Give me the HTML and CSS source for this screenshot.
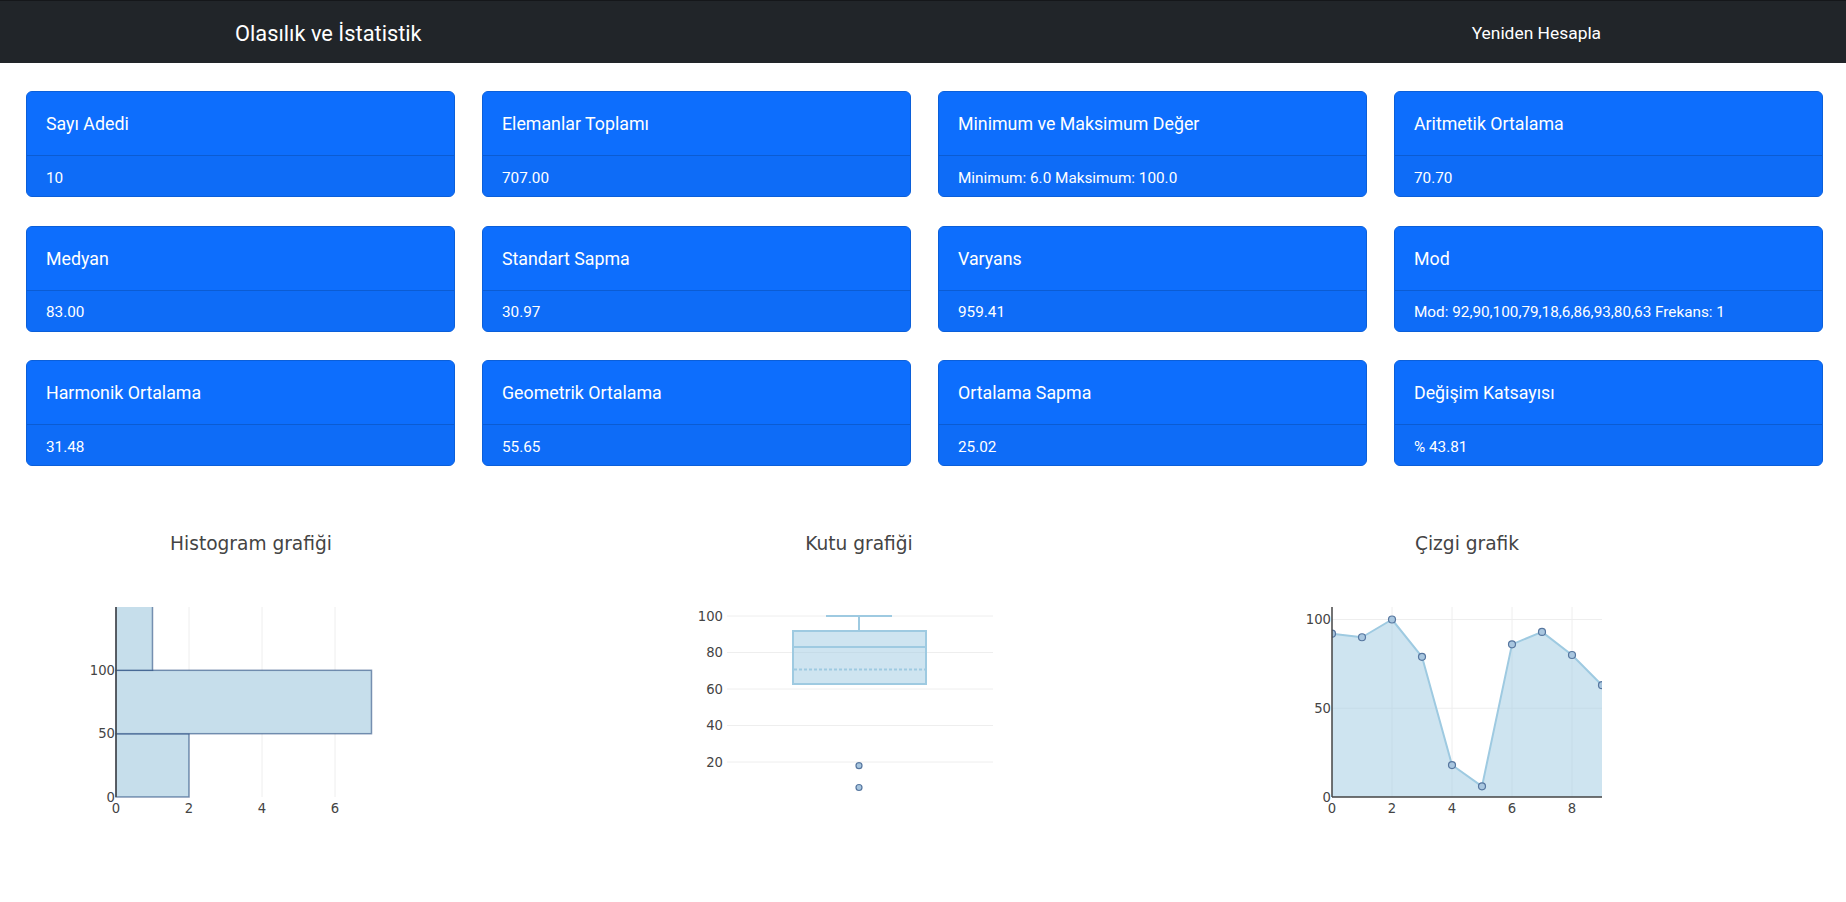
FILE: index.html
```html
<!DOCTYPE html>
<html lang="tr">
<head>
<meta charset="utf-8">
<title>Olasılık ve İstatistik</title>
<link rel="stylesheet" href="styles.css">
</head>
<body>
<nav class="navbar">
  <span class="brand">Olasılık ve İstatistik</span>
  <a class="nav-link" href="#">Yeniden Hesapla</a>
</nav>
<main class="main">
  <section class="cards">
    <div class="card"><div class="card-header">Sayı Adedi</div><div class="card-body">10</div></div>
    <div class="card"><div class="card-header">Elemanlar Toplamı</div><div class="card-body">707.00</div></div>
    <div class="card"><div class="card-header">Minimum ve Maksimum Değer</div><div class="card-body">Minimum: 6.0 Maksimum: 100.0</div></div>
    <div class="card"><div class="card-header">Aritmetik Ortalama</div><div class="card-body">70.70</div></div>
    <div class="card"><div class="card-header">Medyan</div><div class="card-body">83.00</div></div>
    <div class="card"><div class="card-header">Standart Sapma</div><div class="card-body">30.97</div></div>
    <div class="card"><div class="card-header">Varyans</div><div class="card-body">959.41</div></div>
    <div class="card"><div class="card-header">Mod</div><div class="card-body">Mod: 92,90,100,79,18,6,86,93,80,63 Frekans: 1</div></div>
    <div class="card"><div class="card-header">Harmonik Ortalama</div><div class="card-body">31.48</div></div>
    <div class="card"><div class="card-header">Geometrik Ortalama</div><div class="card-body">55.65</div></div>
    <div class="card"><div class="card-header">Ortalama Sapma</div><div class="card-body">25.02</div></div>
    <div class="card"><div class="card-header">Değişim Katsayısı</div><div class="card-body">% 43.81</div></div>
  </section>

  <section class="charts">
    <!-- Histogram -->
    <div class="chart">
      <svg width="450" height="350" viewBox="0 0 450 350" class="plot">
        <defs><clipPath id="c1"><rect x="89" y="107" width="272" height="192"/></clipPath></defs>
        <text x="225" y="50" class="ctitle">Histogram grafiği</text>
        <g class="grid">
          <line x1="163" y1="107" x2="163" y2="297"/>
          <line x1="236" y1="107" x2="236" y2="297"/>
          <line x1="309" y1="107" x2="309" y2="297"/>
        </g>
        <g clip-path="url(#c1)" class="hbar">
          <rect x="90" y="233.7" width="73" height="63.3"/>
          <rect x="90" y="170.3" width="255.5" height="63.4"/>
          <rect x="90" y="100" width="36.5" height="70.3"/>
        </g>
        <line x1="90" y1="107" x2="90" y2="297" class="axis"/>
        <g class="ytick">
          <text x="89" y="301.5">0</text>
          <text x="89" y="238">50</text>
          <text x="89" y="174.6">100</text>
        </g>
        <g class="xtick">
          <text x="90" y="313">0</text>
          <text x="163" y="313">2</text>
          <text x="236" y="313">4</text>
          <text x="309" y="313">6</text>
        </g>
      </svg>
    </div>

    <!-- Box -->
    <div class="chart">
      <svg width="450" height="350" viewBox="0 0 450 350" class="plot">
        <text x="225" y="50" class="ctitle">Kutu grafiği</text>
        <g class="grid">
          <line x1="93" y1="262" x2="359" y2="262"/>
          <line x1="93" y1="225.5" x2="359" y2="225.5"/>
          <line x1="93" y1="189" x2="359" y2="189"/>
          <line x1="93" y1="152.5" x2="359" y2="152.5"/>
          <line x1="93" y1="116" x2="359" y2="116"/>
        </g>
        <g class="box">
          <line x1="225" y1="116" x2="225" y2="131"/>
          <line x1="192" y1="116" x2="258" y2="116"/>
          <rect x="159" y="131" width="133" height="53" class="boxrect"/>
          <line x1="159" y1="147" x2="292" y2="147"/>
          <line x1="160" y1="169.5" x2="291" y2="169.5" class="mean"/>
        </g>
        <g class="marker">
          <circle cx="225" cy="265.7" r="3"/>
          <circle cx="225" cy="287.5" r="3"/>
        </g>
        <g class="ytick">
          <text x="89" y="266.5">20</text>
          <text x="89" y="230">40</text>
          <text x="89" y="193.5">60</text>
          <text x="89" y="157">80</text>
          <text x="89" y="120.5">100</text>
        </g>
      </svg>
    </div>

    <!-- Line -->
    <div class="chart">
      <svg width="450" height="350" viewBox="0 0 450 350" class="plot">
        <defs><clipPath id="c3"><rect x="90" y="107" width="270" height="190"/></clipPath></defs>
        <text x="225" y="50" class="ctitle">Çizgi grafik</text>
        <g class="grid">
          <line x1="150" y1="107" x2="150" y2="297"/>
          <line x1="210" y1="107" x2="210" y2="297"/>
          <line x1="270" y1="107" x2="270" y2="297"/>
          <line x1="330" y1="107" x2="330" y2="297"/>
          <line x1="90" y1="208.25" x2="360" y2="208.25"/>
          <line x1="90" y1="119.5" x2="360" y2="119.5"/>
        </g>
        <g clip-path="url(#c3)">
          <polygon class="area" points="90,297 90,133.7 120,137.25 150,119.5 180,156.8 210,265.05 240,286.35 270,144.35 300,131.9 330,155 360,185.2 360,297"/>
          <polyline class="trace" points="90,133.7 120,137.25 150,119.5 180,156.8 210,265.05 240,286.35 270,144.35 300,131.9 330,155 360,185.2"/>
          <g class="marker">
            <circle cx="90" cy="133.7" r="3.5"/>
            <circle cx="120" cy="137.25" r="3.5"/>
            <circle cx="150" cy="119.5" r="3.5"/>
            <circle cx="180" cy="156.8" r="3.5"/>
            <circle cx="210" cy="265.05" r="3.5"/>
            <circle cx="240" cy="286.35" r="3.5"/>
            <circle cx="270" cy="144.35" r="3.5"/>
            <circle cx="300" cy="131.9" r="3.5"/>
            <circle cx="330" cy="155" r="3.5"/>
            <circle cx="360" cy="185.2" r="3.5"/>
          </g>
        </g>
        <line x1="90" y1="107" x2="90" y2="297" class="axis"/>
        <line x1="90" y1="297" x2="360" y2="297" class="axis"/>
        <g class="ytick">
          <text x="89" y="301.5">0</text>
          <text x="89" y="212.7">50</text>
          <text x="89" y="124">100</text>
        </g>
        <g class="xtick">
          <text x="90" y="313">0</text>
          <text x="150" y="313">2</text>
          <text x="210" y="313">4</text>
          <text x="270" y="313">6</text>
          <text x="330" y="313">8</text>
        </g>
      </svg>
    </div>
  </section>
</main>
</body>
</html>
```

FILE: styles.css
```css
html, body {
  margin: 0;
  padding: 0;
  background: #fff;
}

body {
  font-family: Roboto, "Liberation Sans", Arial, sans-serif;
  color: #212529;
}

.navbar {
  height: 63px;
  box-sizing: border-box;
  background: #212529;
  border-top: 1px solid #15171a;
  display: flex;
  align-items: center;
  padding: 3px 0 0 235px;
}

.brand {
  color: #fff;
  font-size: 21.8px;
  line-height: 1;
}

.nav-link {
  color: #fff;
  text-decoration: none;
  font-size: 17.4px;
  line-height: 1;
  margin-left: 1050px;
}

.main {
  padding: 28px 23px 0 26px;
}

.cards {
  display: grid;
  grid-template-columns: repeat(4, 429px);
  column-gap: 27px;
  row-gap: 28.5px;
}

.card {
  height: 106px;
  box-sizing: border-box;
  border: 1px solid #0b5fd9;
  border-radius: 6px;
  overflow: hidden;
  background: #0d6efd;
  color: #fff;
  display: flex;
  flex-direction: column;
}

.card-header {
  height: 64px;
  box-sizing: border-box;
  border-bottom: 1px solid #0b5cd3;
  padding: 0 19px;
  display: flex;
  align-items: center;
  font-size: 17.8px;
  background: #0d6efd;
}

.card-body {
  flex: 1;
  padding: 3px 19px 0;
  display: flex;
  align-items: center;
  font-size: 15.3px;
  background: #0e6cf7;
}

.charts {
  display: grid;
  grid-template-columns: repeat(3, 608px);
  margin-top: 34px;
}

.chart {
  height: 350px;
}

.plot {
  display: block;
  font-family: "DejaVu Sans", Verdana, sans-serif;
}

.ctitle {
  font-size: 18.6px;
  fill: #444;
  text-anchor: middle;
}

.grid line {
  stroke: #eee;
  stroke-width: 1;
}

.axis {
  stroke: #444;
  stroke-width: 1.5;
}

.ytick text {
  font-size: 13.2px;
  fill: #444;
  text-anchor: end;
}

.xtick text {
  font-size: 13.2px;
  fill: #444;
  text-anchor: middle;
}

.hbar rect {
  fill: #c6deeb;
  stroke: rgba(8, 48, 107, 0.5);
  stroke-width: 1.5;
}

.box line {
  stroke: #9ecae1;
  stroke-width: 2;
}

.boxrect {
  fill: rgba(158, 202, 225, 0.5);
  stroke: #9ecae1;
  stroke-width: 2;
}

.box .mean {
  stroke-dasharray: 3 2;
}

.marker circle {
  fill: #a8c6df;
  stroke: #56769f;
  stroke-width: 1.2;
}

.area {
  fill: rgba(158, 202, 225, 0.5);
  stroke: none;
}

.trace {
  fill: none;
  stroke: #9ecae1;
  stroke-width: 2;
  stroke-linejoin: round;
}
```
